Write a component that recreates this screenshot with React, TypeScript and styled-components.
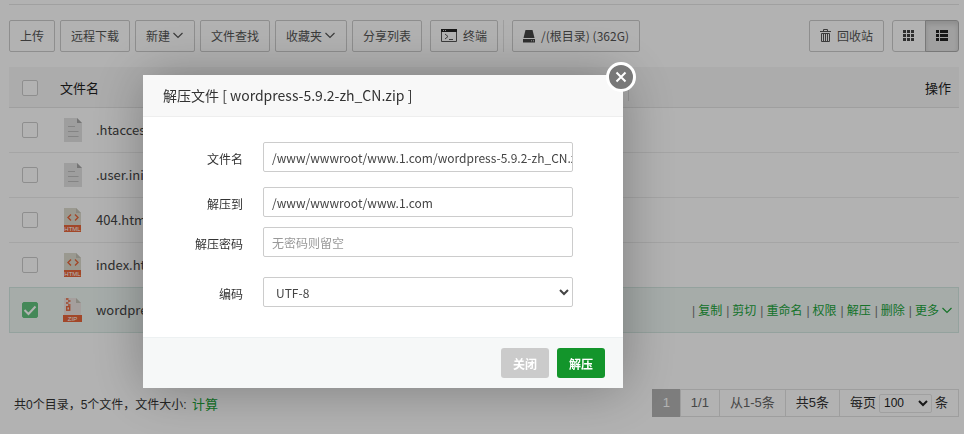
import React from "react";
import styled, { createGlobalStyle, css } from "styled-components";

const sans = `"Noto Sans CJK SC", sans-serif`;
const arial = `"Liberation Sans", "Noto Sans CJK SC", sans-serif`;

const GlobalStyle = createGlobalStyle`
  *, *::before, *::after { box-sizing: border-box; }
  body { margin: 0; background: #fff; color: #333; font: 12px/18px ${sans}; overflow: hidden; }
  button, input, select { font-family: inherit; margin: 0; }
  a { text-decoration: none; color: #20a53a; }
  svg { display: block; flex: none; }
`;

const Page = styled.main`
  padding: 4px 5px 0 9px;
`;

const Toolbar = styled.div`
  display: flex;
  align-items: stretch;
  gap: 5px;
  padding: 15px 0;
  border-top: 1px solid #e6e6e6;
`;

const ToolButton = styled.button<{ $gap?: number }>`
  display: flex;
  align-items: center;
  gap: ${(p) => p.$gap ?? 0}px;
  height: 32px;
  padding: 0 10px;
  border: 1px solid #ccc;
  border-radius: 2px;
  background: #fff;
  color: #555;
  font-size: 12px;
  line-height: 18px;
  white-space: nowrap;
`;

const ToolSection = styled.div<{ $divided?: boolean }>`
  display: flex;
  padding: 0 ${(p) => (p.$divided ? 5 : 0)}px 0 3px;
  border-right: ${(p) => (p.$divided ? "1px solid #e2e2e2" : "0")};
`;

const RightTools = styled.div`
  display: flex;
  gap: 8px;
  margin-left: auto;
`;

const ViewSwitch = styled.div`
  display: flex;
`;

const ViewButton = styled.button<{ $active?: boolean }>`
  display: flex;
  align-items: center;
  justify-content: center;
  width: 34px;
  height: 32px;
  padding: 0;
  border: 1px solid #ccc;
  border-radius: 3px 0 0 3px;
  background: #fff;
  color: #444;
  ${(p) =>
    p.$active &&
    css`
      margin-left: -1px;
      border-color: #adadad;
      border-radius: 0 3px 3px 0;
      background: #e6e6e6;
      color: #222;
      box-shadow: inset 0 3px 5px rgba(0, 0, 0, 0.125);
    `}
`;

const FileTable = styled.table`
  width: 100%;
  table-layout: fixed;
  border-collapse: separate;
  border-spacing: 0;
  font-size: 13px;
`;

const SelectCol = styled.col`
  width: 51px;
`;

const NameCol = styled.col`
  width: 60%;
`;

const HeadCell = styled.th<{ $align?: string }>`
  height: 41px;
  padding: 2px 8px 0 0;
  border-bottom: 1px solid #e4e4e4;
  background: #f7f7f7;
  color: #222;
  font-weight: 400;
  text-align: ${(p) => p.$align ?? "left"};
`;

const HeadLabel = styled.div`
  margin-right: -7px;
  padding: 4px 0;
  border-right: 1px solid #ddd;
`;

const FileRow = styled.tr<{ $selected?: boolean }>`
  td {
    height: 45px;
    padding: 0;
    border-bottom: 1px solid #ececec;
  }
  ${(p) =>
    p.$selected &&
    css`
      td {
        background: #eef6f3;
        border-bottom-color: #d5e8e2;
        box-shadow: 0 -1px 0 #d5e8e2;
      }
      td:first-child { border-left: 1px solid #d5e8e2; }
      td:last-child { border-right: 1px solid #d5e8e2; }
    `}
`;

const Tick = styled.input`
  appearance: none;
  display: block;
  width: 16px;
  height: 16px;
  margin: 0 0 0 13px;
  border: 1px solid #ccc;
  border-radius: 2px;
  background: #fff;
  td & { margin-left: 13px; }
  &:checked {
    margin-left: 12px;
    border-color: #62c37e;
    background: #62c37e url("data:image/svg+xml,%3Csvg xmlns='http://www.w3.org/2000/svg' viewBox='0 0 14 14' fill='none' stroke='white' stroke-width='2'%3E%3Cpath d='M1.5 7l4 4 7-7.5'/%3E%3C/svg%3E");
  }
`;

const FileName = styled.label`
  display: flex;
  align-items: center;
  gap: 14px;
  padding-left: 3px;
  color: #444;
  white-space: nowrap;
`;

const Actions = styled.div`
  display: flex;
  justify-content: flex-end;
  padding: 2px 5px 0 0;
  color: #777;
  font-size: 12px;
  font-family: ${arial};
  white-space: nowrap;
  a { display: flex; align-items: center; }
  span { margin: 0 3px 0 4px; }
`;

const Bottom = styled.footer`
  display: flex;
  align-items: center;
  justify-content: space-between;
  margin-top: 56px;
  padding-left: 5px;
`;

const Summary = styled.div`
  padding-top: 4px;
  color: #333;
  font-family: ${arial};
  a { margin-left: 2px; font-size: 13px; }
`;

const Pager = styled.div`
  display: flex;
  font: 13px/18px ${arial};
`;

const PagerCell = styled.span<{ $current?: boolean; $strong?: boolean }>`
  display: flex;
  align-items: center;
  gap: 3px;
  height: 28px;
  margin-left: -1px;
  padding: 0 10px;
  border: 1px solid #e3e3e3;
  color: ${(p) => (p.$strong ? "#333" : "#666")};
  white-space: nowrap;
  ${(p) =>
    p.$current &&
    css`
      border-color: #b4b4b4;
      background: #b4b4b4;
      color: #fff;
    `}
`;

const PageSize = styled.select`
  width: 53px;
  height: 19px;
  padding: 0;
  border: 1px solid #e6e6e6;
  border-radius: 2px;
  background: #fff;
  color: #222;
  font-size: 12px;
`;

const Shade = styled.div`
  position: fixed;
  inset: 0;
  padding: 75px 0 0 143px;
  background: rgba(0, 0, 0, 0.3);
`;

const Dialog = styled.section`
  position: relative;
  width: 480px;
  background: #fff;
  box-shadow: 1px 1px 50px rgba(0, 0, 0, 0.3);
`;

const DialogTitle = styled.h2`
  margin: 0;
  padding: 0 20px;
  border-bottom: 1px solid #eee;
  background: #f8f8f8;
  color: #333;
  font-size: 14px;
  font-weight: 400;
  line-height: 41px;
`;

const CloseButton = styled.button`
  position: absolute;
  top: -13px;
  right: -13px;
  display: flex;
  width: 30px;
  height: 30px;
  align-items: center;
  justify-content: center;
  padding: 0;
  border: 3px solid #fff;
  border-radius: 50%;
  background: #787878;
  color: #fff;
`;

const DialogBody = styled.div`
  padding: 25px 50px 30px 0;
`;

const Field = styled.div<{ $after?: number }>`
  display: flex;
  align-items: center;
  gap: 20px;
  margin-bottom: ${(p) => p.$after ?? 0}px;
`;

const FieldLabel = styled.label`
  width: 100px;
  padding-top: 4px;
  text-align: right;
`;

const controlStyle = css`
  flex: 1;
  min-width: 0;
  height: 30px;
  padding: 0 0 0 8px;
  border: 1px solid #ccc;
  border-radius: 2px;
  background: #fff;
  color: #444;
  font-size: 12px;
`;

const TextInput = styled.input`
  ${controlStyle}
  &::placeholder { color: #999; }
`;

const Select = styled.select`
  ${controlStyle}
`;

const DialogFooter = styled.div`
  display: flex;
  justify-content: flex-end;
  gap: 8px;
  padding: 10px 18px;
  border-top: 1px solid #edf1f2;
  background: #f6f8f8;
`;

const FooterButton = styled.button<{ $primary?: boolean }>`
  height: 30px;
  padding: 0 12px;
  border: 0;
  border-radius: 3px;
  background: ${(p) => (p.$primary ? "#13952b" : "#cbcbcb")};
  color: #fff;
  font-size: 12px;
  font-weight: 700;
`;

const Chevron = () => (
  <svg width="14" height="12" viewBox="0 0 14 12" fill="none" stroke="currentColor" strokeWidth="1.2">
    <path d="M3.5 3L8 7.5l4.5-4.5" />
  </svg>
);

const TerminalIcon = () => (
  <svg width="16" height="14" viewBox="0 0 16 14" fill="none" stroke="#555">
    <path d="M.5 .5h15v12H.5z" />
    <path d="M0 1.5h16" stroke="#222" strokeWidth="3" />
    <path d="M2 1.5h1M4 1.5h1" stroke="#ccc" />
    <path d="M4 5l3 2.5L4 10M8 10.5h4" />
  </svg>
);

const DriveIcon = () => (
  <svg width="12" height="13" viewBox="0 0 12 13" fill="#444">
    <path d="M2.5 0h7l2 8H.5z" />
    <path d="M0 9h12v3.5H0z" />
    <path d="M8 10.8h1M10 10.8h1" stroke="#ddd" />
  </svg>
);

const TrashIcon = () => (
  <svg width="11" height="14" viewBox="0 0 11 14" fill="none" stroke="#555">
    <path d="M0 2.5h11M3.5 2.5v-2h4v2M1.5 4.5v8h8v-8zM3.5 4.5v8M5.5 4.5v8M7.5 4.5v8" />
  </svg>
);

const GridIcon = () => (
  <svg width="12" height="12" viewBox="0 0 12 12" fill="currentColor">
    {[0, 4, 8].map((y) => [0, 4, 8].map((x) => <rect key={`${x}${y}`} x={x} y={y} width="3" height="3" />))}
  </svg>
);

const ListIcon = () => (
  <svg width="12" height="12" viewBox="0 0 12 12" fill="currentColor">
    {[0, 4, 8].map((y) => (
      <path key={y} d={`M0 ${y}h3v3H0zM4 ${y}h8v3H4z`} />
    ))}
  </svg>
);

const CloseIcon = () => (
  <svg width="12" height="12" viewBox="0 0 12 12" fill="none" stroke="currentColor" strokeWidth="2">
    <path d="M1.5 1.5l9 9M10.5 1.5l-9 9" />
  </svg>
);

type Kind = "text" | "html" | "zip";

const FileIcon = ({ kind }: { kind: Kind }) => {
  if (kind === "text")
    return (
      <svg width="19" height="24" viewBox="0 0 19 24">
        <path d="M1 0h13l5 5v19H1z" fill="#e2e2e2" />
        <path d="M14 0l5 5h-5z" fill="#a8a8a8" />
        <path d="M5 8.5h7M5 13.5h10.5M5 18.5h10.5" stroke="#bdbdbd" />
      </svg>
    );
  const html = kind === "html";
  return (
    <svg width="19" height="24" viewBox="0 0 19 24">
      <path d="M1 0h12l5 5v12H1z" fill={html ? "#dddccf" : "#ece4e1"} />
      <path d="M13 0l5 5h-5z" fill="#c6c3b8" />
      <path d={html ? "M1 17h17v7H1z" : "M0 17h19v7H0z"} fill="#e8663c" />
      {html ? (
        <path d="M8 6.5L5 9.5l3 3M12 6.5l3 3-3 3" fill="none" stroke="#e8663c" strokeWidth="1.4" />
      ) : (
        <>
          <path d="M3 1h2.5M5 3h2.5M3 5h2.5M5 7h2.5" stroke="#e8663c" strokeWidth="1.5" />
          <rect x="3.7" y="8.7" width="3" height="3.5" fill="none" stroke="#e8663c" strokeWidth="1.4" />
        </>
      )}
      <text
        x="9.5"
        y="23"
        textAnchor="middle"
        fill="#fff"
        fontFamily="Liberation Sans, sans-serif"
        fontSize="6"
      >
        {html ? "HTML" : "ZIP"}
      </text>
    </svg>
  );
};

const files: { name: string; kind: Kind; selected?: boolean }[] = [
  { name: ".htaccess", kind: "text" },
  { name: ".user.ini", kind: "text" },
  { name: "404.html", kind: "html" },
  { name: "index.html", kind: "html" },
  { name: "wordpress-5.9.2-zh_CN.zip", kind: "zip", selected: true },
];

const actions = ["复制", "剪切", "重命名", "权限", "解压", "删除", "更多"];

export default function App() {
  return (
    <>
      <GlobalStyle />
      <Page>
        <Toolbar>
          <ToolButton>上传</ToolButton>
          <ToolButton>远程下载</ToolButton>
          <ToolButton>新建<Chevron /></ToolButton>
          <ToolButton>文件查找</ToolButton>
          <ToolButton>收藏夹<Chevron /></ToolButton>
          <ToolButton>分享列表</ToolButton>
          <ToolSection $divided>
            <ToolButton $gap={6}><TerminalIcon />终端</ToolButton>
          </ToolSection>
          <ToolSection>
            <ToolButton $gap={6}><DriveIcon />/(根目录) (362G)</ToolButton>
          </ToolSection>
          <RightTools>
            <ToolButton $gap={6}><TrashIcon />回收站</ToolButton>
            <ViewSwitch>
              <ViewButton aria-label="图标视图"><GridIcon /></ViewButton>
              <ViewButton aria-label="列表视图" $active><ListIcon /></ViewButton>
            </ViewSwitch>
          </RightTools>
        </Toolbar>
        <FileTable>
          <colgroup>
            <SelectCol />
            <NameCol />
            <col />
          </colgroup>
          <thead>
            <tr>
              <HeadCell><Tick type="checkbox" aria-label="全选" /></HeadCell>
              <HeadCell><HeadLabel>文件名</HeadLabel></HeadCell>
              <HeadCell $align="right">操作</HeadCell>
            </tr>
          </thead>
          <tbody>
            {files.map((f, i) => (
              <FileRow key={f.name} $selected={f.selected}>
                <td><Tick type="checkbox" id={`file-${i}`} defaultChecked={f.selected} /></td>
                <td>
                  <FileName htmlFor={`file-${i}`}><FileIcon kind={f.kind} />{f.name}</FileName>
                </td>
                <td>
                  {f.selected && (
                    <Actions>
                      {actions.map((a) => (
                        <React.Fragment key={a}>
                          <span>|</span>
                          <a href="#">{a}{a === "更多" && <Chevron />}</a>
                        </React.Fragment>
                      ))}
                    </Actions>
                  )}
                </td>
              </FileRow>
            ))}
          </tbody>
        </FileTable>
        <Bottom>
          <Summary>共0个目录，5个文件，文件大小: <a href="#">计算</a></Summary>
          <Pager>
            <PagerCell $current>1</PagerCell>
            <PagerCell>1/1</PagerCell>
            <PagerCell>从1-5条</PagerCell>
            <PagerCell $strong>共5条</PagerCell>
            <PagerCell $strong>
              <label htmlFor="page-size">每页</label>
              <PageSize id="page-size" defaultValue="100"><option>100</option></PageSize>
              条
            </PagerCell>
          </Pager>
        </Bottom>
      </Page>
      <Shade>
        <Dialog role="dialog" aria-labelledby="unzip-title">
          <DialogTitle id="unzip-title">解压文件 [ wordpress-5.9.2-zh_CN.zip ]</DialogTitle>
          <CloseButton aria-label="关闭窗口"><CloseIcon /></CloseButton>
          <DialogBody>
            <Field $after={15}>
              <FieldLabel htmlFor="zip-name">文件名</FieldLabel>
              <TextInput id="zip-name" defaultValue="/www/wwwroot/www.1.com/wordpress-5.9.2-zh_CN.zip" />
            </Field>
            <Field $after={10}>
              <FieldLabel htmlFor="zip-target">解压到</FieldLabel>
              <TextInput id="zip-target" defaultValue="/www/wwwroot/www.1.com" />
            </Field>
            <Field $after={20}>
              <FieldLabel htmlFor="zip-password">解压密码</FieldLabel>
              <TextInput id="zip-password" placeholder="无密码则留空" />
            </Field>
            <Field>
              <FieldLabel htmlFor="zip-encoding">编码</FieldLabel>
              <Select id="zip-encoding"><option>UTF-8</option></Select>
            </Field>
          </DialogBody>
          <DialogFooter>
            <FooterButton>关闭</FooterButton>
            <FooterButton $primary>解压</FooterButton>
          </DialogFooter>
        </Dialog>
      </Shade>
    </>
  );
}
